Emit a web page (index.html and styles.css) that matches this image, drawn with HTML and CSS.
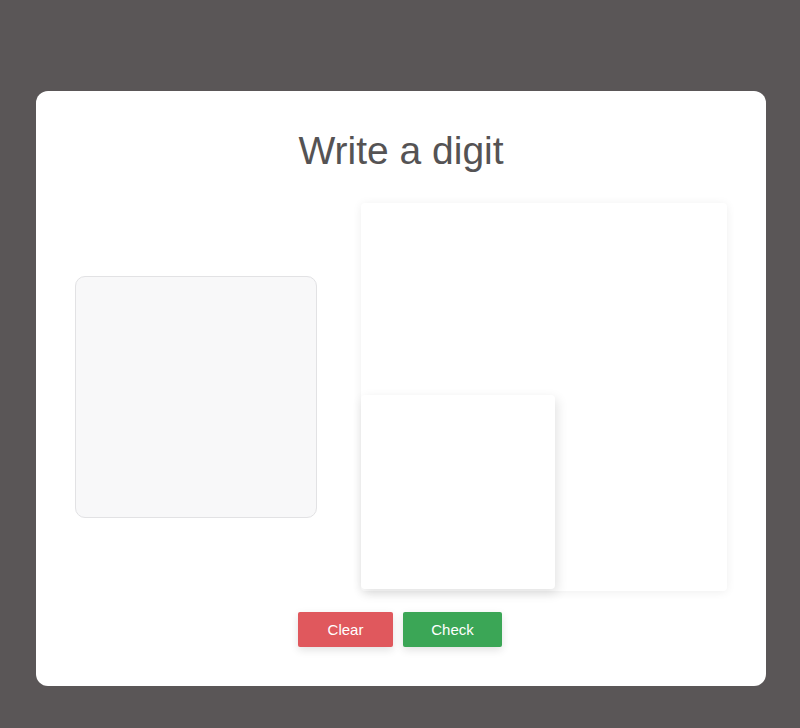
FILE: index.html
```html
<!DOCTYPE html>
<html lang="en">
<head>
<meta charset="utf-8">
<title>Write a digit</title>
<link rel="stylesheet" href="styles.css">
</head>
<body>
  <main class="card">
    <h1 class="title">Write a digit</h1>
    <div class="workspace">
      <div class="draw-pad"></div>
      <div class="preview">
        <div class="preview-thumb"></div>
      </div>
    </div>
    <div class="actions">
      <button class="btn btn-clear" type="button">Clear</button>
      <button class="btn btn-check" type="button">Check</button>
    </div>
  </main>
</body>
</html>
```
FILE: styles.css
```css
html, body {
  margin: 0;
  padding: 0;
}
body {
  background: #5a5657;
  font-family: "Liberation Sans", Arial, sans-serif;
  min-height: 728px;
  overflow: hidden;
}
.card {
  box-sizing: border-box;
  width: 730px;
  margin: 91px 0 0 36px;
  background: #ffffff;
  border-radius: 12px;
  padding: 37px 39px 39px;
}
.title {
  margin: 0;
  text-align: center;
  font-size: 39px;
  line-height: 46px;
  font-weight: 400;
  color: #555354;
}
.workspace {
  margin-top: 29px;
  display: flex;
  align-items: center;
  gap: 44px;
}
.draw-pad {
  box-sizing: border-box;
  width: 242px;
  height: 242px;
  background: #f8f8f9;
  border: 1px solid #e2e2e4;
  border-radius: 10px;
  flex: none;
}
.preview {
  position: relative;
  width: 366px;
  height: 388px;
  background: #ffffff;
  border-radius: 4px;
  box-shadow: 0 1px 10px rgba(0, 0, 0, 0.07);
  flex: none;
}
.preview-thumb {
  position: absolute;
  left: 0;
  bottom: 2px;
  width: 194px;
  height: 194px;
  background: #ffffff;
  border-radius: 4px;
  box-shadow: 2px 4px 12px rgba(0, 0, 0, 0.12);
}
.actions {
  margin-top: 21px;
  padding-right: 2px;
  display: flex;
  justify-content: center;
  gap: 10px;
}
.btn {
  height: 35px;
  border: none;
  border-radius: 2px;
  color: #ffffff;
  font-family: "Liberation Sans", Arial, sans-serif;
  font-size: 15px;
  box-shadow: 0 3px 8px rgba(0, 0, 0, 0.12);
  cursor: pointer;
}
.btn-clear {
  width: 95px;
  background: #e0585d;
}
.btn-check {
  width: 99px;
  background: #3ba656;
}
```
